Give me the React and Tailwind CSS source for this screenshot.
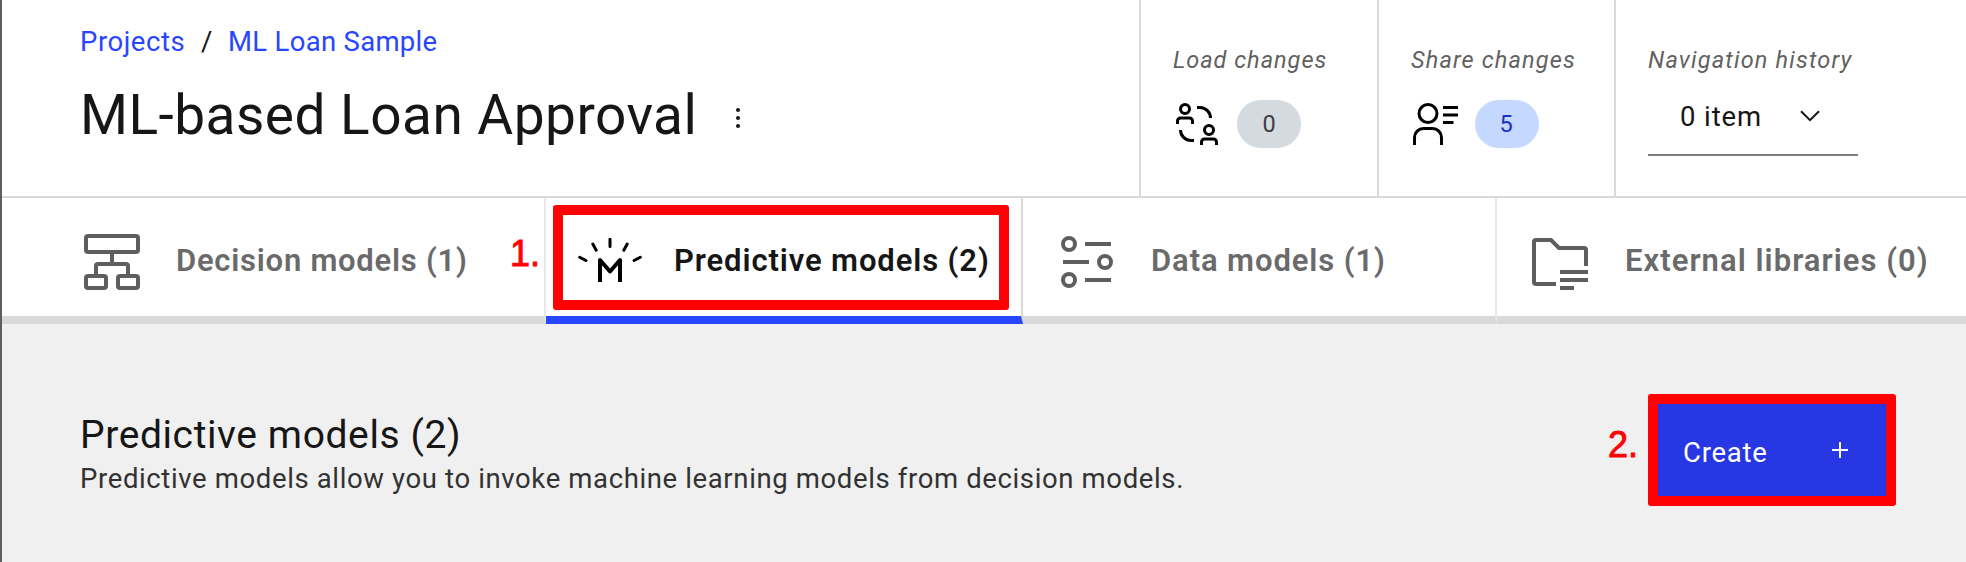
import React from "react";

const LoadIcon = () => (
  <svg className="h-12 w-12 shrink-0" viewBox="0 0 48 48" fill="none" stroke="#000" strokeWidth="3">
    <circle cx="12" cy="9" r="4.5" />
    <path d="M4.5 24v-3a3 3 0 0 1 3-3h9a3 3 0 0 1 3 3v3" />
    <circle cx="36" cy="30" r="4.5" />
    <path d="M28.5 45v-3a3 3 0 0 1 3-3h9a3 3 0 0 1 3 3v3" />
    <path d="M24 7.5h3A10.5 10.5 0 0 1 37.5 18" />
    <path d="M7.5 30A10.5 10.5 0 0 0 18 40.5h3" />
  </svg>
);

const ShareIcon = () => (
  <svg className="h-12 w-12 shrink-0" viewBox="0 0 48 48" fill="none" stroke="#000" strokeWidth="3">
    <circle cx="18" cy="13.5" r="9" />
    <path d="M4.5 45v-7.5a9 9 0 0 1 9-9h9a9 9 0 0 1 9 9V45" />
    <path d="M33 7.5h15M33 15h15M33 22.5h10.5" />
  </svg>
);

const DecisionIcon = () => (
  <svg className="h-14 w-14 shrink-0" viewBox="0 0 56 56" fill="none" stroke="#5e5e5e" strokeWidth="4">
    <rect x="2" y="2" width="52" height="16" rx="2" />
    <path d="M28 18v12M12 42V32a2 2 0 0 1 2-2h28a2 2 0 0 1 2 2v10" />
    <rect x="2" y="42" width="20" height="12" rx="2" />
    <rect x="34" y="42" width="20" height="12" rx="2" />
  </svg>
);

const PredictiveIcon = () => (
  <svg className="h-11 w-16 shrink-0" viewBox="0 0 64 44" fill="none" stroke="#000">
    <path d="M22 44V22l10 11.5L42 22v22" strokeWidth="4" strokeLinejoin="round" />
    <path
      d="M32 1.2v7.2M14.8 6l3.4 6.2M49.2 6l-3.4 6.2M1.7 19.2l6.2 3.3M62.3 19.2l-6.2 3.3"
      strokeWidth="3"
      strokeLinecap="round"
    />
  </svg>
);

const DataIcon = () => (
  <svg className="h-[52px] w-[52px] shrink-0" viewBox="0 0 52 52" fill="none" stroke="#5e5e5e" strokeWidth="4">
    <circle cx="8" cy="8" r="6" />
    <circle cx="44" cy="26" r="6" />
    <circle cx="8" cy="44" r="6" />
    <path d="M24 8h26M2 26h26M24 44h26" />
  </svg>
);

const LibraryIcon = () => (
  <svg className="h-14 w-14 shrink-0" viewBox="0 0 56 56" fill="none" stroke="#5e5e5e" strokeWidth="4">
    <path d="M24 46H4a2 2 0 0 1-2-2V4a2 2 0 0 1 2-2h15l8 8h25a2 2 0 0 1 2 2v16" />
    <path d="M28 34h28M28 42h28M28 50h14" />
  </svg>
);

export default function App() {
  return (
    <div className="relative flex h-[562px] w-[1966px] flex-col overflow-hidden border-l-2 border-[#5f5f5f] bg-[#f0f0f0] font-[Roboto,sans-serif] text-[#161616] whitespace-nowrap">
      <header className="flex h-[198px] shrink-0 border-b-2 border-[#d9d9d9] bg-white">
        <div className="w-[1137px] pl-[78px]">
          <nav className="mt-6 flex h-9 text-[27.5px] leading-9 text-[#2846ff]">
            <a className="w-[121px] tracking-[0.55px]">Projects</a>
            <span className="w-[27px] text-[#161616]">/</span>
            <a className="tracking-[0.3px]">ML Loan Sample</a>
          </nav>
          <div className="mt-[23px] flex h-16 items-center">
            <h1 className="w-[656px] text-[55px] leading-[64px] tracking-[0.47px]">ML-based Loan Approval</h1>
            <svg className="mt-[6px] h-5 w-1" viewBox="0 0 4 20" fill="#161616">
              <circle cx="2" cy="2" r="2" />
              <circle cx="2" cy="10" r="2" />
              <circle cx="2" cy="18" r="2" />
            </svg>
          </div>
        </div>
        <div className="w-[238px] border-l-2 border-[#d9d9d9] pl-8">
          <div className="mt-[45px] text-[23.5px] leading-[30px] tracking-[0.98px] text-[#616161] italic">Load changes</div>
          <div className="mt-[25px] flex">
            <LoadIcon />
            <span className="ml-4 h-12 w-16 rounded-full bg-[#d5d9e0] text-center text-[23.5px] leading-[48px] text-[#3c3f42]">0</span>
          </div>
        </div>
        <div className="w-[237px] border-l-2 border-[#d9d9d9] pl-8">
          <div className="mt-[45px] text-[23.5px] leading-[30px] tracking-[1.15px] text-[#616161] italic">Share changes</div>
          <div className="mt-[25px] flex">
            <div className="-ml-px"><ShareIcon /></div>
            <span className="ml-[17px] h-12 w-16 rounded-full bg-[#c5d8ff] pr-0.5 text-center text-[23.5px] leading-[48px] text-[#1f30c8]">5</span>
          </div>
        </div>
        <div className="w-[352px] border-l-2 border-[#d9d9d9] pl-8">
          <div className="mt-[45px] text-[23.5px] leading-[30px] tracking-[1.17px] text-[#616161] italic">Navigation history</div>
          <div className="mt-[17px] flex h-16 w-[210px] justify-between border-b-2 border-[#7f7c7c] pr-[38px] pl-8">
            <span className="mt-[7px] text-[27.5px] leading-9 tracking-[0.9px]">0 item</span>
            <svg className="mt-[18px] h-3 w-5" viewBox="0 0 20 12" fill="none" stroke="#161616" strokeWidth="2">
              <path d="M1 1.2l9 9 9-9" />
            </svg>
          </div>
        </div>
      </header>

      <div className="flex h-[126px] shrink-0 bg-white text-[31px] leading-10 font-semibold text-[#6a6a6a]">
        <div className="flex w-[544px] shrink-0 border-r-2 border-b-8 border-r-[#e8e8e8] border-b-[#d9d9d9] pl-[82px]">
          <div className="mt-9"><DecisionIcon /></div>
          <span className="mt-[43px] ml-9 tracking-[0.75px]">Decision models (1)</span>
        </div>
        <div className="flex w-[477px] shrink-0 border-r-2 border-b-8 border-r-[#d9d9d9] border-b-[#2846ff] pl-8 text-[#161616]">
          <div className="mt-10"><PredictiveIcon /></div>
          <span className="mt-[43px] ml-8 tracking-[0.89px]">Predictive models (2)</span>
        </div>
        <div className="flex w-[474px] shrink-0 border-r-2 border-b-8 border-r-[#e8e8e8] border-b-[#d9d9d9] pl-[38px]">
          <div className="mt-[38px]"><DataIcon /></div>
          <span className="mt-[43px] ml-[38px] tracking-[0.9px]">Data models (1)</span>
        </div>
        <div className="flex flex-1 border-b-8 border-[#d9d9d9] pl-[35px]">
          <div className="mt-10"><LibraryIcon /></div>
          <span className="mt-[43px] ml-[37px] tracking-[1.04px]">External libraries (0)</span>
        </div>
      </div>

      <main className="flex flex-1 justify-between pr-[80px] pl-[78px]">
        <div className="mt-[87px]">
          <h2 className="text-[39px] leading-[48px] tracking-[0.6px]">Predictive models (2)</h2>
          <p className="mt-[2px] text-[27.5px] leading-9 tracking-[0.63px] text-[#323232]">
            Predictive models allow you to invoke machine learning models from decision models.
          </p>
        </div>
        <button className="mt-20 flex h-[92px] w-[228px] justify-between bg-[#2737e4] pr-[38px] pl-[25px] text-white">
          <span className="mt-[31px] text-[27.5px] leading-9 tracking-[0.75px]">Create</span>
          <svg className="mt-[38px] h-4 w-4" viewBox="0 0 16 16" stroke="#fff" strokeWidth="2">
            <path d="M8 0v16M0 8h16" />
          </svg>
        </button>
      </main>

      <div className="absolute top-[205px] left-[551px] h-[105px] w-[456px] rounded-[3px] border-10 border-[#ff0005]" />
      <div className="absolute top-[394px] left-[1646px] h-28 w-[248px] rounded-[3px] border-10 border-[#ff0005]" />
      <span className="absolute top-[234px] left-[508px] font-['Liberation_Sans',sans-serif] text-[36px] leading-10 text-[#ff0005] [-webkit-text-stroke:0.9px_#ff0005]">1.</span>
      <span className="absolute top-[425px] left-[1606px] font-['Liberation_Sans',sans-serif] text-[36px] leading-10 text-[#ff0005] [-webkit-text-stroke:0.9px_#ff0005]">2.</span>
    </div>
  );
}
